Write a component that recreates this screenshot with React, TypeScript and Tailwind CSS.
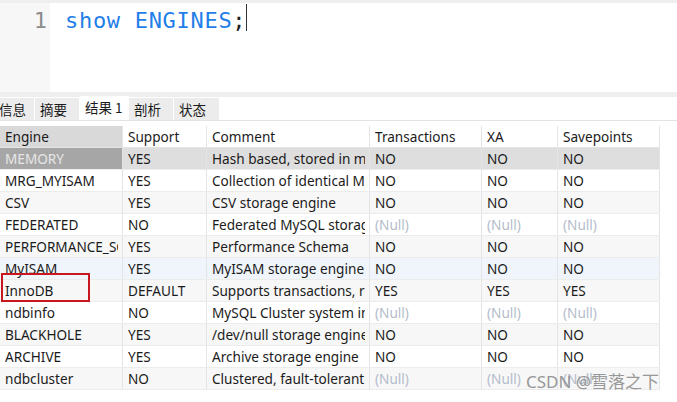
import React from "react";

type Row = {
  engine: string;
  support: string;
  comment: string;
  tx: string | null;
  xa: string | null;
  sp: string | null;
};

const rows: Row[] = [
  { engine: "MEMORY", support: "YES", comment: "Hash based, stored in memory, useful for temporary tables", tx: "NO", xa: "NO", sp: "NO" },
  { engine: "MRG_MYISAM", support: "YES", comment: "Collection of identical MyISAM tables", tx: "NO", xa: "NO", sp: "NO" },
  { engine: "CSV", support: "YES", comment: "CSV storage engine", tx: "NO", xa: "NO", sp: "NO" },
  { engine: "FEDERATED", support: "NO", comment: "Federated MySQL storage engine", tx: null, xa: null, sp: null },
  { engine: "PERFORMANCE_SCHEMA", support: "YES", comment: "Performance Schema", tx: "NO", xa: "NO", sp: "NO" },
  { engine: "MyISAM", support: "YES", comment: "MyISAM storage engine", tx: "NO", xa: "NO", sp: "NO" },
  { engine: "InnoDB", support: "DEFAULT", comment: "Supports transactions, row-level locking, and foreign keys", tx: "YES", xa: "YES", sp: "YES" },
  { engine: "ndbinfo", support: "NO", comment: "MySQL Cluster system information storage engine", tx: null, xa: null, sp: null },
  { engine: "BLACKHOLE", support: "YES", comment: "/dev/null storage engine (anything you write to it disappears)", tx: "NO", xa: "NO", sp: "NO" },
  { engine: "ARCHIVE", support: "YES", comment: "Archive storage engine", tx: "NO", xa: "NO", sp: "NO" },
  { engine: "ndbcluster", support: "NO", comment: "Clustered, fault-tolerant tables", tx: null, xa: null, sp: null },
];

const cols = ["w-[123px]", "w-[84px]", "w-[163px]", "w-[112px]", "w-[76px]", "w-[102px]"];

function Cell({ value, w, extra = "" }: { value: string | null; w: string; extra?: string }) {
  return (
    <div className={`${w} ${extra} h-full shrink-0 border-r border-[#e4e4e4] pl-[5px] pr-[4px] leading-[22px]`}>
      <div className="overflow-hidden whitespace-nowrap">
        {value === null ? <span className="text-[#b4bccb]">(Null)</span> : value}
      </div>
    </div>
  );
}

function rowBg(i: number) {
  if (i === 0) return "bg-[#dedede]";
  if (i === 5) return "bg-[#f0f5fb]";
  return i % 2 === 0 ? "bg-[#f7f7f7]" : "bg-white";
}

const tabs = [
  { label: "信息", w: "w-[41px] -ml-[6px]" },
  { label: "摘要", w: "w-[45px]" },
  { label: "结果 1", w: "w-[49px]", active: true },
  { label: "剖析", w: "w-[45px]" },
  { label: "状态", w: "w-[46px]" },
];

export default function App() {
  return (
    <div className="relative h-[402px] w-[677px] overflow-hidden bg-white font-['Noto_Sans','Noto_Sans_CJK_SC',sans-serif] text-[13.6px] text-[#1b1b1b]">
      <div className="h-[3px] bg-[#efefef]" />

      <div className="flex h-[89px]">
        <div className="w-[50px] shrink-0 bg-[#f7f7f7] pr-[3px] pt-[2px] text-right font-['DejaVu_Sans_Mono',monospace] text-[22px] leading-[32px] text-[#8c8c8c]">
          1
        </div>
        <div className="flex h-[34px] items-start pl-[15px] pt-[2px] font-['DejaVu_Sans_Mono',monospace] text-[22px] leading-[32px] tracking-[0.7px] text-[#1f7ee8]">
          show ENGINES
          <span className="text-[#222]">;</span>
          <span className="mt-[-1px] h-[27px] w-px bg-[#333]" />
        </div>
      </div>

      <div className="h-[5px] bg-[#eeeeee]" />

      <div className="flex h-[24px] items-end border-b border-[#e2e2e2] font-['Noto_Sans_CJK_SC',sans-serif] text-[13.5px]">
        {tabs.map((t) => (
          <div
            key={t.label}
            className={`${t.w} shrink-0 border-r border-white pl-[5px] ${
              t.active ? "h-[24px] bg-white leading-[22px]" : "h-[22px] bg-[#ececec] leading-[23px]"
            }`}
          >
            {t.label}
          </div>
        ))}
      </div>

      <div className="h-[5px]" />

      <div className="w-[660px]">
        <div className="flex h-[22px] border-b border-[#e4e4e4] bg-white">
          {["Engine", "Support", "Comment", "Transactions", "XA", "Savepoints"].map((h, i) => (
            <Cell key={h} value={h} w={cols[i]} extra={i === 0 ? "bg-[#d9d9d9]" : ""} />
          ))}
        </div>
        {rows.map((r, i) => (
          <div key={r.engine} className={`flex h-[22px] border-b border-[#ececec] ${rowBg(i)}`}>
            <Cell value={r.engine} w={cols[0]} extra={i === 0 ? "bg-[#a6a6a6] text-[#e6e6e6]" : ""} />
            <Cell value={r.support} w={cols[1]} />
            <Cell value={r.comment} w={cols[2]} />
            <Cell value={r.tx} w={cols[3]} />
            <Cell value={r.xa} w={cols[4]} />
            <Cell value={r.sp} w={cols[5]} />
          </div>
        ))}
      </div>

      <div className="absolute left-[1px] top-[273px] h-[29px] w-[89px] border-2 border-[#c8171e]" />

      <div className="absolute left-[526px] top-[370px] font-['Noto_Sans','Noto_Sans_CJK_SC',sans-serif] text-[17px] leading-[24px] text-[#8e8e8e] opacity-90">
        CSDN @雪落之下
      </div>
    </div>
  );
}
